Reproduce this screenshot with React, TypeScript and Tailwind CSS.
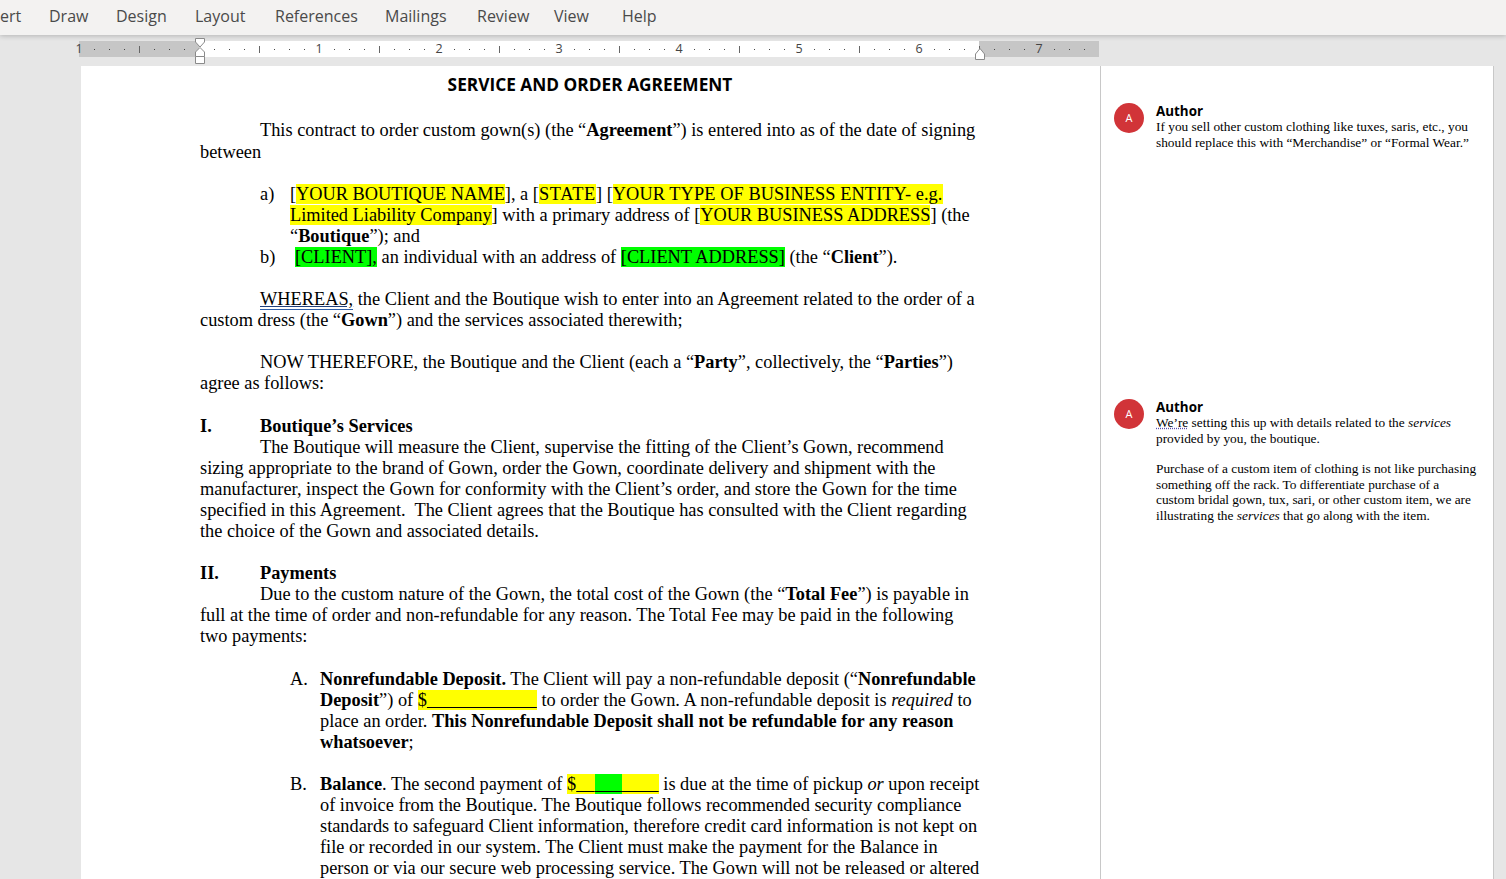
import type { ReactNode } from "react";

const menuItems = [
  { label: "ert", width: "w-[49px]" },
  { label: "Draw", width: "w-[67px]" },
  { label: "Design", width: "w-[79px]" },
  { label: "Layout", width: "w-[80px]" },
  { label: "References", width: "w-[110px]" },
  { label: "Mailings", width: "w-[92px]" },
  { label: "Review", width: "w-[77px]" },
  { label: "View", width: "w-[68px]" },
  { label: "Help", width: "w-[60px]" },
];

const Y = ({ children }: { children: ReactNode }) => <span className="bg-[#ffff00]">{children}</span>;
const G = ({ children }: { children: ReactNode }) => <span className="bg-[#00ff00]">{children}</span>;
const Blank = ({ n }: { n: number }) => <span className="underline">{"\u00a0".repeat(n)}</span>;

const Row = ({ children, className = "" }: { children: ReactNode; className?: string }) => (
  <div className={`h-[21px] leading-[21px] whitespace-pre ${className}`}>{children}</div>
);

const Ruler = () => {
  const cells = Array.from({ length: 68 }, (_, i) => i - 8);
  return (
    <div className="relative ml-[79px] mt-[6px] flex h-[16px] w-[1020px]">
      <div className="w-[120px] bg-[#c6c6c6]" />
      <div className="w-[780px] bg-white" />
      <div className="w-[120px] bg-[#c6c6c6]" />
      <div className="absolute left-[-7.5px] top-0 flex h-full font-['Open_Sans',sans-serif] text-[12.5px] text-[#444]">
        {cells.map((c) => {
          const inch = c % 8 === 0 && c !== 0;
          const half = Math.abs(c % 8) === 4;
          return (
            <div key={c} className="flex h-full w-[15px] items-center justify-center">
              {inch ? (
                <span className="leading-none">{Math.abs(c / 8)}</span>
              ) : half ? (
                <span className="h-[7px] w-px bg-[#666]" />
              ) : c !== 0 ? (
                <span className="h-px w-px bg-[#444]" />
              ) : null}
            </div>
          );
        })}
      </div>
      {/* indent markers */}
      <svg className="absolute left-[115px] top-[-3px]" width="12" height="28" viewBox="0 0 12 28">
        <path d="M1.5 .5H10.5V4L6 9 1.5 4Z" fill="#fff" stroke="#8a8a8a" />
        <path d="M6 9.5 10.5 14V18.5H1.5V14Z" fill="#fff" stroke="#8a8a8a" />
        <path d="M1.5 18.5H10.5V25.5H1.5Z" fill="#fff" stroke="#8a8a8a" />
      </svg>
      <svg className="absolute left-[895px] top-[7px]" width="12" height="13" viewBox="0 0 12 13">
        <path d="M6 .5 10.5 6V11.5H1.5V6Z" fill="#fff" stroke="#8a8a8a" />
      </svg>
    </div>
  );
};

const Avatar = () => (
  <div className="flex h-[30px] w-[30px] shrink-0 items-center justify-center rounded-full bg-[#d13438] font-['Open_Sans',sans-serif] text-[11px] text-white">
    A
  </div>
);

const Comment = ({ children, className }: { children: ReactNode; className: string }) => (
  <div className={`flex gap-[12px] pl-[13px] ${className}`}>
    <Avatar />
    <div>
      <div className="h-[16px] font-['Open_Sans',sans-serif] text-[13.4px] font-bold leading-[16px] text-black">Author</div>
      <div className="font-['Liberation_Serif',serif] text-[13.35px] text-black">{children}</div>
    </div>
  </div>
);

const Note = ({ children, className = "" }: { children: ReactNode; className?: string }) => (
  <div className={`h-[15.5px] leading-[15.5px] whitespace-pre ${className}`}>{children}</div>
);

export default function App() {
  return (
    <div className="h-[879px] w-[1506px] overflow-hidden bg-[#e6e6e6]">
      <div className="relative flex h-[35px] items-center bg-[#f3f2f1] pb-[3px] font-['Open_Sans',sans-serif] text-[16px] text-[#4a4a4a] shadow-[0_1px_5px_rgba(0,0,0,0.22)]">
        {menuItems.map((m) => (
          <span key={m.label} className={`shrink-0 ${m.width}`}>{m.label}</span>
        ))}
      </div>
      <Ruler />
      <div className="ml-[81px] mt-[9px] flex h-[813px] w-[1413px] border-r border-[#c8c8c8]">
        <div className="h-full w-[1019px] bg-white pl-[119px] pt-[8px] font-['Liberation_Serif',serif] text-[18.33px] text-black">
          <div className="w-[780px] text-center font-['Open_Sans',sans-serif] text-[17.3px] font-bold leading-[21px]">
            SERVICE AND ORDER AGREEMENT
          </div>
          <div className="mt-[25px]">
            <Row className="pl-[60px]">This contract to order custom gown(s) (the “<b>Agreement</b>”) is entered into as of the date of signing</Row>
            <Row className="mt-px">between</Row>
          </div>
          <div className="mt-[21px]">
            <div className="flex pl-[60px]">
              <span className="w-[30px] leading-[21px]">a)</span>
              <div>
                <Row>[<Y>YOUR BOUTIQUE NAME</Y>], a [<Y><span className="tracking-[0.7px]">STATE</span></Y>] [<Y><span className="tracking-[0.08px]">YOUR TYPE OF BUSINESS ENTITY- e.g.</span></Y></Row>
                <Row><Y>Limited Liability Company</Y>] with a primary address of [<Y>YOUR BUSINESS ADDRESS</Y>] (the</Row>
                <Row>“<b>Boutique</b>”); and</Row>
              </div>
            </div>
            <div className="flex pl-[60px]">
              <span className="w-[35px] leading-[21px]">b)</span>
              <Row><G>[CLIENT],</G> an individual with an address of <G>[CLIENT ADDRESS]</G> (the “<b>Client</b>”).</Row>
            </div>
          </div>
          <div className="mt-[21px]">
            <Row className="pl-[60px]"><span className="border-b border-[#2f5fa8] underline decoration-[#1f3f7a]">WHEREAS,</span> the Client and the Boutique wish to enter into an Agreement related to the order of a</Row>
            <Row>custom dress (the “<b>Gown</b>”) and the services associated therewith;</Row>
          </div>
          <div className="mt-[21px]">
            <Row className="pl-[60px]">NOW THEREFORE, the Boutique and the Client (each a “<b>Party</b>”, collectively, the “<b>Parties</b>”)</Row>
            <Row>agree as follows:</Row>
          </div>
          <div className="mt-[22px]">
            <Row className="flex font-bold"><span className="w-[60px]">I.</span><span>Boutique’s Services</span></Row>
            <Row className="pl-[60px]">The Boutique will measure the Client, supervise the fitting of the Client’s Gown, recommend</Row>
            <Row>sizing appropriate to the brand of Gown, order the Gown, coordinate delivery and shipment with the</Row>
            <Row>manufacturer, inspect the Gown for conformity with the Client’s order, and store the Gown for the time</Row>
            <Row>specified in this Agreement.  The Client agrees that the Boutique has consulted with the Client regarding</Row>
            <Row>the choice of the Gown and associated details.</Row>
          </div>
          <div className="mt-[21px]">
            <Row className="flex font-bold"><span className="w-[60px]">II.</span><span>Payments</span></Row>
            <Row className="pl-[60px]">Due to the custom nature of the Gown, the total cost of the Gown (the “<b>Total Fee</b>”) is payable in</Row>
            <Row>full at the time of order and non-refundable for any reason. The Total Fee may be paid in the following</Row>
            <Row>two payments:</Row>
          </div>
          <div className="mt-[22px] flex pl-[90px]">
            <span className="w-[30px] leading-[21px]">A.</span>
            <div>
              <Row><b>Nonrefundable Deposit.</b> The Client will pay a non-refundable deposit (“<b>Nonrefundable</b></Row>
              <Row><b>Deposit</b>”) of <Y>$<Blank n={24} /></Y> to order the Gown. A non-refundable deposit is <i>required</i> to</Row>
              <Row>place an order. <b>This Nonrefundable Deposit shall not be refundable for any reason</b></Row>
              <Row><b>whatsoever</b>;</Row>
            </div>
          </div>
          <div className="mt-[21px] flex pl-[90px]">
            <span className="w-[30px] leading-[21px]">B.</span>
            <div>
              <Row><b>Balance</b>. The second payment of <Y>$<Blank n={4} /></Y><G><Blank n={6} /></G><Y><Blank n={8} /></Y> is due at the time of pickup <i>or</i> upon receipt</Row>
              <Row>of invoice from the Boutique. The Boutique follows recommended security compliance</Row>
              <Row>standards to safeguard Client information, therefore credit card information is not kept on</Row>
              <Row>file or recorded in our system. The Client must make the payment for the Balance in</Row>
              <Row>person or via our secure web processing service. The Gown will not be released or altered</Row>
            </div>
          </div>
        </div>
        <div className="h-full w-[393px] border-l border-[#c8c8c8] bg-white">
          <Comment className="mt-[37px]">
            <Note>If you sell other custom clothing like tuxes, saris, etc., you</Note>
            <Note>should replace this with “Merchandise” or “Formal Wear.”</Note>
          </Comment>
          <Comment className="mt-[249px]">
            <Note><span className="underline decoration-dotted decoration-[#5b4fb0]">We’re</span> setting this up with details related to the <i>services</i></Note>
            <Note>provided by you, the boutique.</Note>
            <Note className="mt-[15px]">Purchase of a custom item of clothing is not like purchasing</Note>
            <Note>something off the rack. To differentiate purchase of a</Note>
            <Note>custom bridal gown, tux, sari, or other custom item, we are</Note>
            <Note>illustrating the <i>services</i> that go along with the item.</Note>
          </Comment>
        </div>
      </div>
    </div>
  );
}
